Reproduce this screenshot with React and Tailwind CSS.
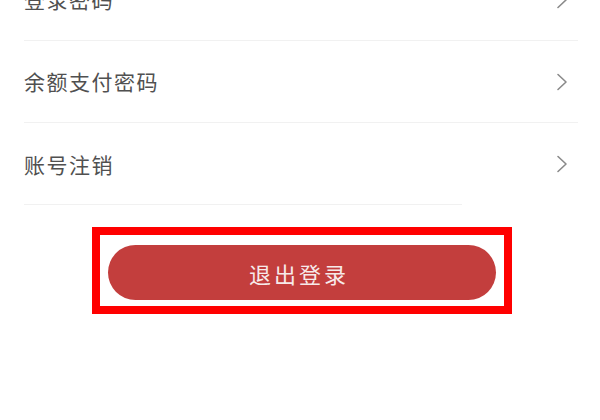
import React from 'react';

const Chevron = () => (
  <svg width="12" height="18" viewBox="0 0 12 18" fill="none" className="shrink-0">
    <polyline points="2,1.5 10,9 2,16.5" stroke="#8a8a8a" strokeWidth="1.6" strokeLinecap="round" strokeLinejoin="round" />
  </svg>
);

const rows = ['登录密码', '余额支付密码', '账号注销'];

export default function App() {
  return (
    <div
      className="w-[600px] h-[420px] overflow-hidden bg-white"
      style={{ fontFamily: '"Noto Sans CJK SC", "Noto Sans", sans-serif' }}
    >
      <div className="-mt-[41px]">
        {rows.map((label, i) => (
          <div
            key={label}
            className={`ml-[24px] mr-[22px] h-[82px] flex items-center justify-between pr-[10px] ${
              i < 2 ? 'border-b border-[#f1f1f1]' : ''
            }`}
          >
            <span className="text-[21px] tracking-[1.5px] text-[#505050] leading-none">{label}</span>
            <Chevron />
          </div>
        ))}
        <div className="ml-[24px] w-[438px] h-px -mt-px bg-[#f1f1f1]" />
      </div>

      {/* Logout button */}
      <div className="mt-[22px] ml-[92px] w-[420px] border-[8px] border-[#ff0000] pt-[10px] pb-[6px] px-[8px]">
        <button className="w-[388px] h-[55px] rounded-full bg-[#c33e3d] flex items-center justify-center">
          <span className="text-[22px] tracking-[3px] text-[#f7eaea] leading-none pr-[6px]">退出登录</span>
        </button>
      </div>
    </div>
  );
}
